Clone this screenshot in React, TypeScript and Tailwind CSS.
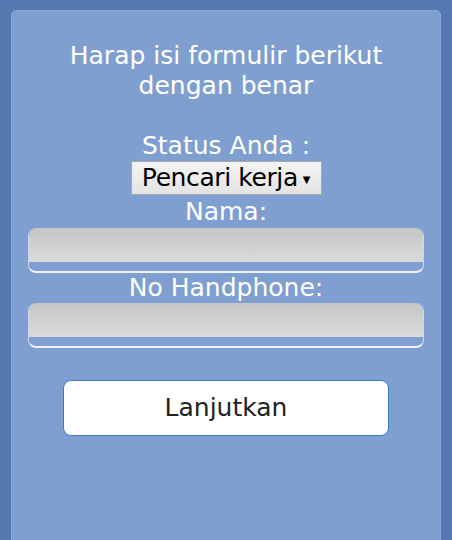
import React, { useState } from 'react';

function FieldInput() {
  return (
    <div className="h-[45px] rounded-[8px] border-b-2 border-x border-b-[#eef4ff] border-x-[#c9d8f0] overflow-hidden">
      <div className="h-[34px] rounded-t-[8px] bg-gradient-to-b from-[#c6c6c6] to-[#dadada]" />
    </div>
  );
}

function App() {
  const [status, setStatus] = useState('Pencari kerja');

  return (
    <div className="min-h-screen bg-[#5478b0] pt-[10px] px-[11px] overflow-hidden" style={{ fontFamily: '"DejaVu Sans", sans-serif' }}>
      <div className="h-[560px] rounded-t-[5px] bg-[#7f9fd0] border border-[#8aa8d6] px-[16px] text-white text-center">
        <h1 className="pt-[30px] text-[25px] leading-[30px]">
          Harap isi formulir berikut
          <br />
          dengan benar
        </h1>

        <div className="mt-[30px] text-[25px] leading-[30px]">Status Anda :</div>
        <div className="flex justify-center">
          <div className="h-[34px] w-[191px] bg-gradient-to-b from-[#f4f4f4] to-[#e4e4e4] border border-[#a9a9a9] flex items-center justify-center gap-[5px] text-black text-[25px] tracking-[-0.4px]">
            <span>{status}</span>
            <span className="text-[10px] mt-[2px]">▼</span>
          </div>
        </div>
        <div className="mt-[1px] text-[25px] leading-[32px]" onClick={() => setStatus('Pencari kerja')}>Nama:</div>
        <FieldInput />
        <div className="text-[25px] leading-[30px]">No Handphone:</div>
        <FieldInput />

        <div className="mt-[32px] flex justify-center">
          <button className="h-[56px] w-[326px] rounded-[8px] bg-white border border-[#3c7dbf] text-[#222] text-[25px]">
            Lanjutkan
          </button>
        </div>
      </div>
    </div>
  );
}

export default App;
